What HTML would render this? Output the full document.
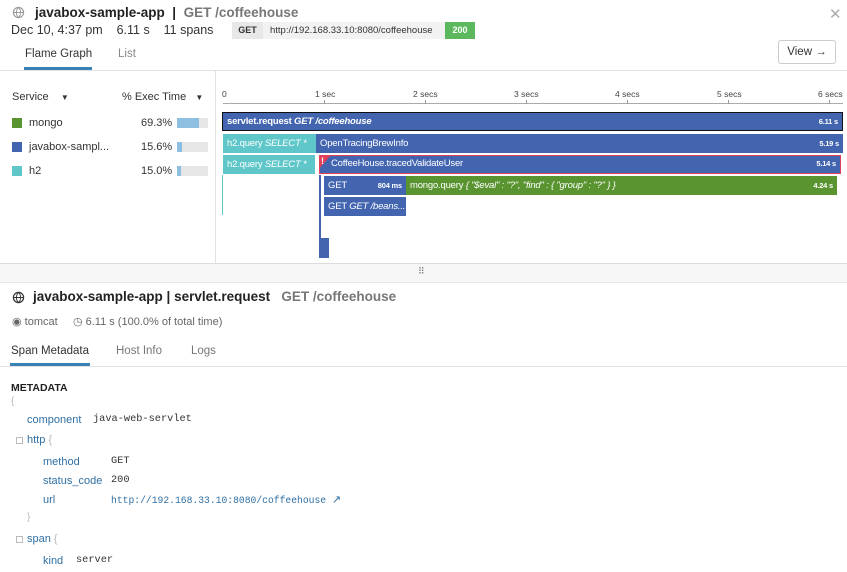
<!DOCTYPE html>
<html><head><style>
*{margin:0;padding:0;box-sizing:border-box}
body{width:847px;height:572px;overflow:hidden;background:#fff;font-family:"Liberation Sans",sans-serif;color:#333;position:relative}
.a{position:absolute;white-space:nowrap}
.bar{position:absolute;height:19px;color:#fff;font-size:9.5px;line-height:19px;padding-left:4px;overflow:hidden;letter-spacing:-0.2px}
.bar i{font-style:italic}
.bar .r{position:absolute;right:4px;top:0;font-size:7.5px;font-weight:bold}
.b{background:#4365b0}.t{background:#5fc7c9}.g{background:#5a9431}
.tick{position:absolute;top:100px;width:1px;height:4px;background:#999}
.tl{position:absolute;top:89px;font-size:8.5px;color:#444}
.mono{font-family:"Liberation Mono",monospace;font-size:10.3px;color:#333}
.key{color:#2f6fa3;font-size:11px}
</style></head><body>
<!-- header -->
<svg class="a" style="left:12px;top:6px" width="13" height="13" viewBox="0 0 14 14"><circle cx="7" cy="7" r="5.5" fill="none" stroke="#999" stroke-width="1.2"/><path d="M1.5 7h11M7 1.5c-3 3-3 8 0 11M7 1.5c3 3 3 8 0 11" fill="none" stroke="#999" stroke-width="1"/></svg>
<div class="a" style="left:35px;top:5px;font-size:13.5px;font-weight:bold;color:#222">javabox-sample-app &nbsp;| &nbsp;<span style="color:#777">GET /coffeehouse</span></div>
<div class="a" style="left:829px;top:5px;font-size:15px;color:#aaa">✕</div>
<div class="a" style="left:11px;top:23px;font-size:12.5px;color:#333">Dec 10, 4:37 pm &nbsp;&nbsp; 6.11 s &nbsp;&nbsp; 11 spans</div>
<div class="a" style="left:232px;top:22px;height:17px;width:31px;background:#e8e8e8;font-size:9px;font-weight:bold;line-height:17px;text-align:center">GET</div>
<div class="a" style="left:263px;top:22px;height:17px;width:182px;background:#f2f2f2;font-size:9.5px;line-height:17px;padding-left:7px">http://192.168.33.10:8080/coffeehouse</div>
<div class="a" style="left:445px;top:22px;height:17px;width:30px;background:#5cb85c;color:#fff;font-size:9px;font-weight:bold;line-height:17px;text-align:center">200</div>
<div class="a" style="left:25px;top:48px;font-size:11.5px;color:#333">Flame Graph</div>
<div class="a" style="left:118px;top:48px;font-size:11.5px;color:#888">List</div>
<div class="a" style="left:24px;top:67px;width:68px;height:3px;background:#3a82b5"></div>
<div class="a" style="left:0;top:70px;width:847px;height:1px;background:#e2e2e2"></div>
<div class="a" style="left:778px;top:40px;width:58px;height:24px;border:1px solid #ccc;border-radius:3px;font-size:11.5px;line-height:22px;text-align:center">View →</div>
<!-- left panel -->
<div class="a" style="left:215px;top:71px;width:1px;height:193px;background:#e2e2e2"></div>
<div class="a" style="left:12px;top:91px;font-size:11px">Service &nbsp;&nbsp;&nbsp;<span style="font-size:8px">▼</span></div>
<div class="a" style="left:122px;top:91px;font-size:11px">% Exec Time &nbsp;&nbsp;<span style="font-size:8px">▼</span></div>
<div class="a" style="left:12px;top:118px;width:10px;height:10px;background:#5a9431"></div>
<div class="a" style="left:12px;top:142px;width:10px;height:10px;background:#4365b0"></div>
<div class="a" style="left:12px;top:166px;width:10px;height:10px;background:#5fc7c9"></div>
<div class="a" style="left:29px;top:117px;font-size:11px">mongo</div>
<div class="a" style="left:29px;top:141px;font-size:11px">javabox-sampl...</div>
<div class="a" style="left:29px;top:165px;font-size:11px">h2</div>
<div class="a" style="left:141px;top:117px;font-size:11px">69.3%</div>
<div class="a" style="left:141px;top:141px;font-size:11px">15.6%</div>
<div class="a" style="left:141px;top:165px;font-size:11px">15.0%</div>
<div class="a" style="left:177px;top:118px;width:31px;height:10px;background:#e6e6e6"><div style="width:22px;height:10px;background:#8ebfe0"></div></div>
<div class="a" style="left:177px;top:142px;width:31px;height:10px;background:#e6e6e6"><div style="width:5px;height:10px;background:#8ebfe0"></div></div>
<div class="a" style="left:177px;top:166px;width:31px;height:10px;background:#e6e6e6"><div style="width:4px;height:10px;background:#8ebfe0"></div></div>
<!-- timeline -->
<div class="a" style="left:223px;top:103px;width:620px;height:1px;background:#aaa"></div>
<div class="tl" style="left:222px">0</div><div class="tl" style="left:315px">1 sec</div><div class="tl" style="left:413px">2 secs</div><div class="tl" style="left:514px">3 secs</div><div class="tl" style="left:615px">4 secs</div><div class="tl" style="left:717px">5 secs</div><div class="tl" style="left:818px">6 secs</div>
<div class="tick" style="left:324px"></div><div class="tick" style="left:425px"></div><div class="tick" style="left:526px"></div><div class="tick" style="left:627px"></div><div class="tick" style="left:728px"></div><div class="tick" style="left:829px"></div>
<div class="bar b" style="left:222px;top:112px;width:621px;border:1px solid #111;line-height:17px;font-weight:bold">servlet.request <i>GET /coffeehouse</i><span class="r">6.11 s</span></div>
<div class="bar t" style="left:223px;top:134px;width:93px">h2.query <i>SELECT * ...</i></div>
<div class="bar b" style="left:316px;top:134px;width:527px">OpenTracingBrewInfo<span class="r">5.19 s</span></div>
<div class="bar t" style="left:223px;top:155px;width:92px">h2.query <i>SELECT * ...</i></div>
<div class="bar b" style="left:319px;top:155px;width:522px;border:1.5px solid #e0405a;line-height:16px;padding-left:11px">CoffeeHouse.tracedValidateUser<span class="r">5.14 s</span></div>
<svg class="a" style="left:319px;top:155px" width="12" height="14"><path d="M0 0H12L0 14Z" fill="#e0405a"/><text x="2" y="9" fill="#fff" font-size="9" font-weight="bold" font-family="Liberation Sans">!</text></svg>
<div class="bar b" style="left:324px;top:176px;width:82px">GET<span class="r">804 ms</span></div>
<div class="bar g" style="left:406px;top:176px;width:431px">mongo.query <i>{ "$eval" : "?", "find" : { "group" : "?" } }</i><span class="r">4.24 s</span></div>
<div class="bar b" style="left:324px;top:197px;width:82px">GET <i>GET /beans...</i></div>
<div class="a" style="left:222px;top:175px;width:1px;height:40px;background:#5fc7c9"></div>
<div class="a" style="left:319px;top:175px;width:2px;height:65px;background:#4365b0"></div>
<div class="a" style="left:319px;top:238px;width:10px;height:20px;background:#4365b0"></div>
<!-- divider -->
<div class="a" style="left:0;top:263px;width:847px;height:1px;background:#ddd"></div>
<div class="a" style="left:0;top:264px;width:847px;height:18px;background:#f7f7f7"></div>
<div class="a" style="left:418px;top:266px;font-size:9px;color:#777;letter-spacing:-1px">⠿</div>
<div class="a" style="left:0;top:282px;width:847px;height:1px;background:#e6e6e6"></div>
<!-- bottom panel -->
<svg class="a" style="left:12px;top:291px" width="13" height="13" viewBox="0 0 14 14"><circle cx="7" cy="7" r="5.5" fill="none" stroke="#333" stroke-width="1.3"/><path d="M1.5 7h11M7 1.5c-3 3-3 8 0 11M7 1.5c3 3 3 8 0 11" fill="none" stroke="#333" stroke-width="1"/></svg>
<div class="a" style="left:33px;top:289px;font-size:13.5px;font-weight:bold;color:#222">javabox-sample-app | servlet.request &nbsp;&nbsp;<span style="color:#777">GET /coffeehouse</span></div>
<div class="a" style="left:12px;top:315px;font-size:11px;color:#666">◉ tomcat &nbsp;&nbsp;&nbsp; ◷ 6.11 s (100.0% of total time)</div>
<div class="a" style="left:11px;top:345px;font-size:11.5px;color:#333">Span Metadata</div>
<div class="a" style="left:116px;top:345px;font-size:11.5px;color:#777">Host Info</div>
<div class="a" style="left:191px;top:345px;font-size:11.5px;color:#777">Logs</div>
<div class="a" style="left:10px;top:363px;width:80px;height:3px;background:#3a82b5"></div>
<div class="a" style="left:0;top:366px;width:847px;height:1px;background:#e2e2e2"></div>
<div class="a" style="left:11px;top:382px;font-size:10.5px;font-weight:bold;color:#222">METADATA</div>
<div class="a" style="left:11px;top:396px;font-size:10px;color:#bbb">{</div>
<div class="a key" style="left:27px;top:414px">component</div><div class="a mono" style="left:93px;top:413px">java-web-servlet</div>
<div class="a" style="left:16px;top:437px;width:7px;height:7px;border:1px solid #bbb"></div>
<div class="a key" style="left:27px;top:434px">http <span style="color:#bbb">{</span></div>
<div class="a key" style="left:43px;top:456px">method</div><div class="a mono" style="left:111px;top:455px">GET</div>
<div class="a key" style="left:43px;top:475px">status_code</div><div class="a mono" style="left:111px;top:474px">200</div>
<div class="a key" style="left:43px;top:494px">url</div><div class="a mono" style="left:111px;top:493px;color:#2f6fa3;font-size:9.7px">http://192.168.33.10:8080/coffeehouse <span style="font-family:'DejaVu Sans';font-size:11px">↗</span></div>
<div class="a" style="left:27px;top:512px;font-size:10px;color:#bbb">}</div>
<div class="a" style="left:16px;top:536px;width:7px;height:7px;border:1px solid #bbb"></div>
<div class="a key" style="left:27px;top:533px">span <span style="color:#bbb">{</span></div>
<div class="a key" style="left:43px;top:555px">kind</div><div class="a mono" style="left:76px;top:554px">server</div>
</body></html>
